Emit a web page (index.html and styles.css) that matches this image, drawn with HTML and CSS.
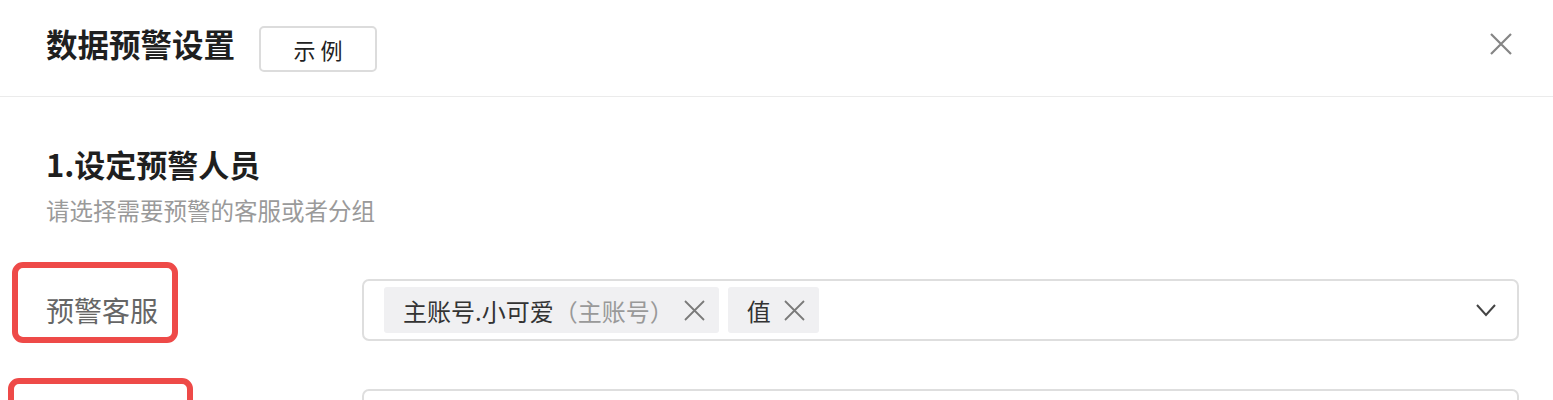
FILE: index.html
```html
<!DOCTYPE html>
<html lang="zh-CN">
<head>
  <meta charset="UTF-8" />
  <meta name="viewport" content="width=device-width, initial-scale=1.0"/>
  <title>数据预警设置</title>
  <link rel="stylesheet" href="styles.css">
</head>
<body>
  <div class="dialog">
    <div class="header">
      <h1>数据预警设置</h1>
      <button class="example-btn">示 例</button>
      <button class="close-btn" aria-label="关闭">
        <svg width="22" height="22" viewBox="0 0 22 22"><path d="M1 1L21 21M21 1L1 21" stroke="#858585" stroke-width="2.2" fill="none"/></svg>
      </button>
    </div>

    <div class="section">
      <h2>1.设定预警人员</h2>
      <p class="hint">请选择需要预警的客服或者分组</p>

      <div class="form-row">
        <div class="label">
          预警客服
          <span class="mark mark-1"></span>
        </div>
        <div class="select">
          <span class="tag">主账号.小可爱<span class="sub">（主账号）</span>
            <svg class="tag-x" width="21" height="21" viewBox="0 0 21 21"><path d="M1 1L20 20M20 1L1 20" stroke="#7a7a7a" stroke-width="1.8" fill="none"/></svg>
          </span>
          <span class="tag">值
            <svg class="tag-x" width="21" height="21" viewBox="0 0 21 21"><path d="M1 1L20 20M20 1L1 20" stroke="#7a7a7a" stroke-width="1.8" fill="none"/></svg>
          </span>
          <svg class="arrow" width="20" height="13" viewBox="0 0 20 13"><path d="M1 1L10 11L19 1" stroke="#444" stroke-width="2" fill="none"/></svg>
        </div>
      </div>

      <div class="form-row">
        <div class="label">
          <span class="mark mark-2"></span>
        </div>
        <div class="select"></div>
      </div>
    </div>
  </div>
</body>
</html>
```

FILE: styles.css
```css
body {
  margin: 0;
  background: #fff;
  font-family: "Noto Sans CJK SC", "Noto Sans", sans-serif;
  color: #222;
}

.dialog {
  width: 100%;
}

.header {
  display: flex;
  align-items: center;
  height: 96px;
  padding: 0 41px 0 46px;
  border-bottom: 1px solid #ebebeb;
}

.header h1 {
  margin: -10px 0 0;
  font-size: 31.5px;
  font-weight: 700;
  line-height: 40px;
  color: #1f1f1f;
}

.example-btn {
  margin-left: 24px;
  width: 118px;
  height: 46px;
  background: #fff;
  border: 2px solid #dcdcdc;
  border-radius: 5px;
  font-family: inherit;
  font-size: 22px;
  color: #222;
  padding: 0;
  margin-top: 2px;
}

.close-btn {
  margin-left: auto;
  background: none;
  border: none;
  padding: 0;
  width: 22px;
  height: 22px;
  margin-top: -8px;
}

.close-btn svg {
  display: block;
}

.section {
  padding: 46px 34px 0 46px;
}

.section h2 {
  margin: 0;
  font-size: 31px;
  font-weight: 700;
  line-height: 42px;
  color: #1f1f1f;
}

.hint {
  margin: 8px 0 0;
  font-size: 23.5px;
  line-height: 34px;
  color: #9a9a9a;
}

.form-row {
  display: flex;
  align-items: center;
  margin-top: 52px;
}

.form-row + .form-row {
  margin-top: 48px;
}

.label {
  position: relative;
  width: 316px;
  height: 40px;
  flex-shrink: 0;
  font-size: 28px;
  line-height: 40px;
  color: #666;
}

.mark {
  position: absolute;
  border: 6px solid #ee4a48;
  border-radius: 11px;
  box-sizing: border-box;
}

.mark-1 {
  left: -34px;
  top: -28px;
  width: 166px;
  height: 81px;
}

.mark-2 {
  left: -38px;
  top: -22px;
  width: 185px;
  height: 81px;
}

.select {
  flex: 1;
  display: flex;
  align-items: center;
  gap: 9px;
  height: 62px;
  box-sizing: border-box;
  padding: 0 20px;
  border: 2px solid #dedede;
  border-radius: 7px;
}

.tag {
  display: flex;
  align-items: center;
  height: 46px;
  padding: 0 14px 0 19px;
  background: #f0f0f2;
  border-radius: 3px;
  font-size: 24px;
  color: #333;
}

.tag .sub {
  color: #999;
}

.tag-x {
  margin-left: 10px;
}

.tag:nth-child(2) .tag-x {
  margin-left: 13px;
}

.arrow {
  margin-left: auto;
  margin-right: 1px;
}
```
